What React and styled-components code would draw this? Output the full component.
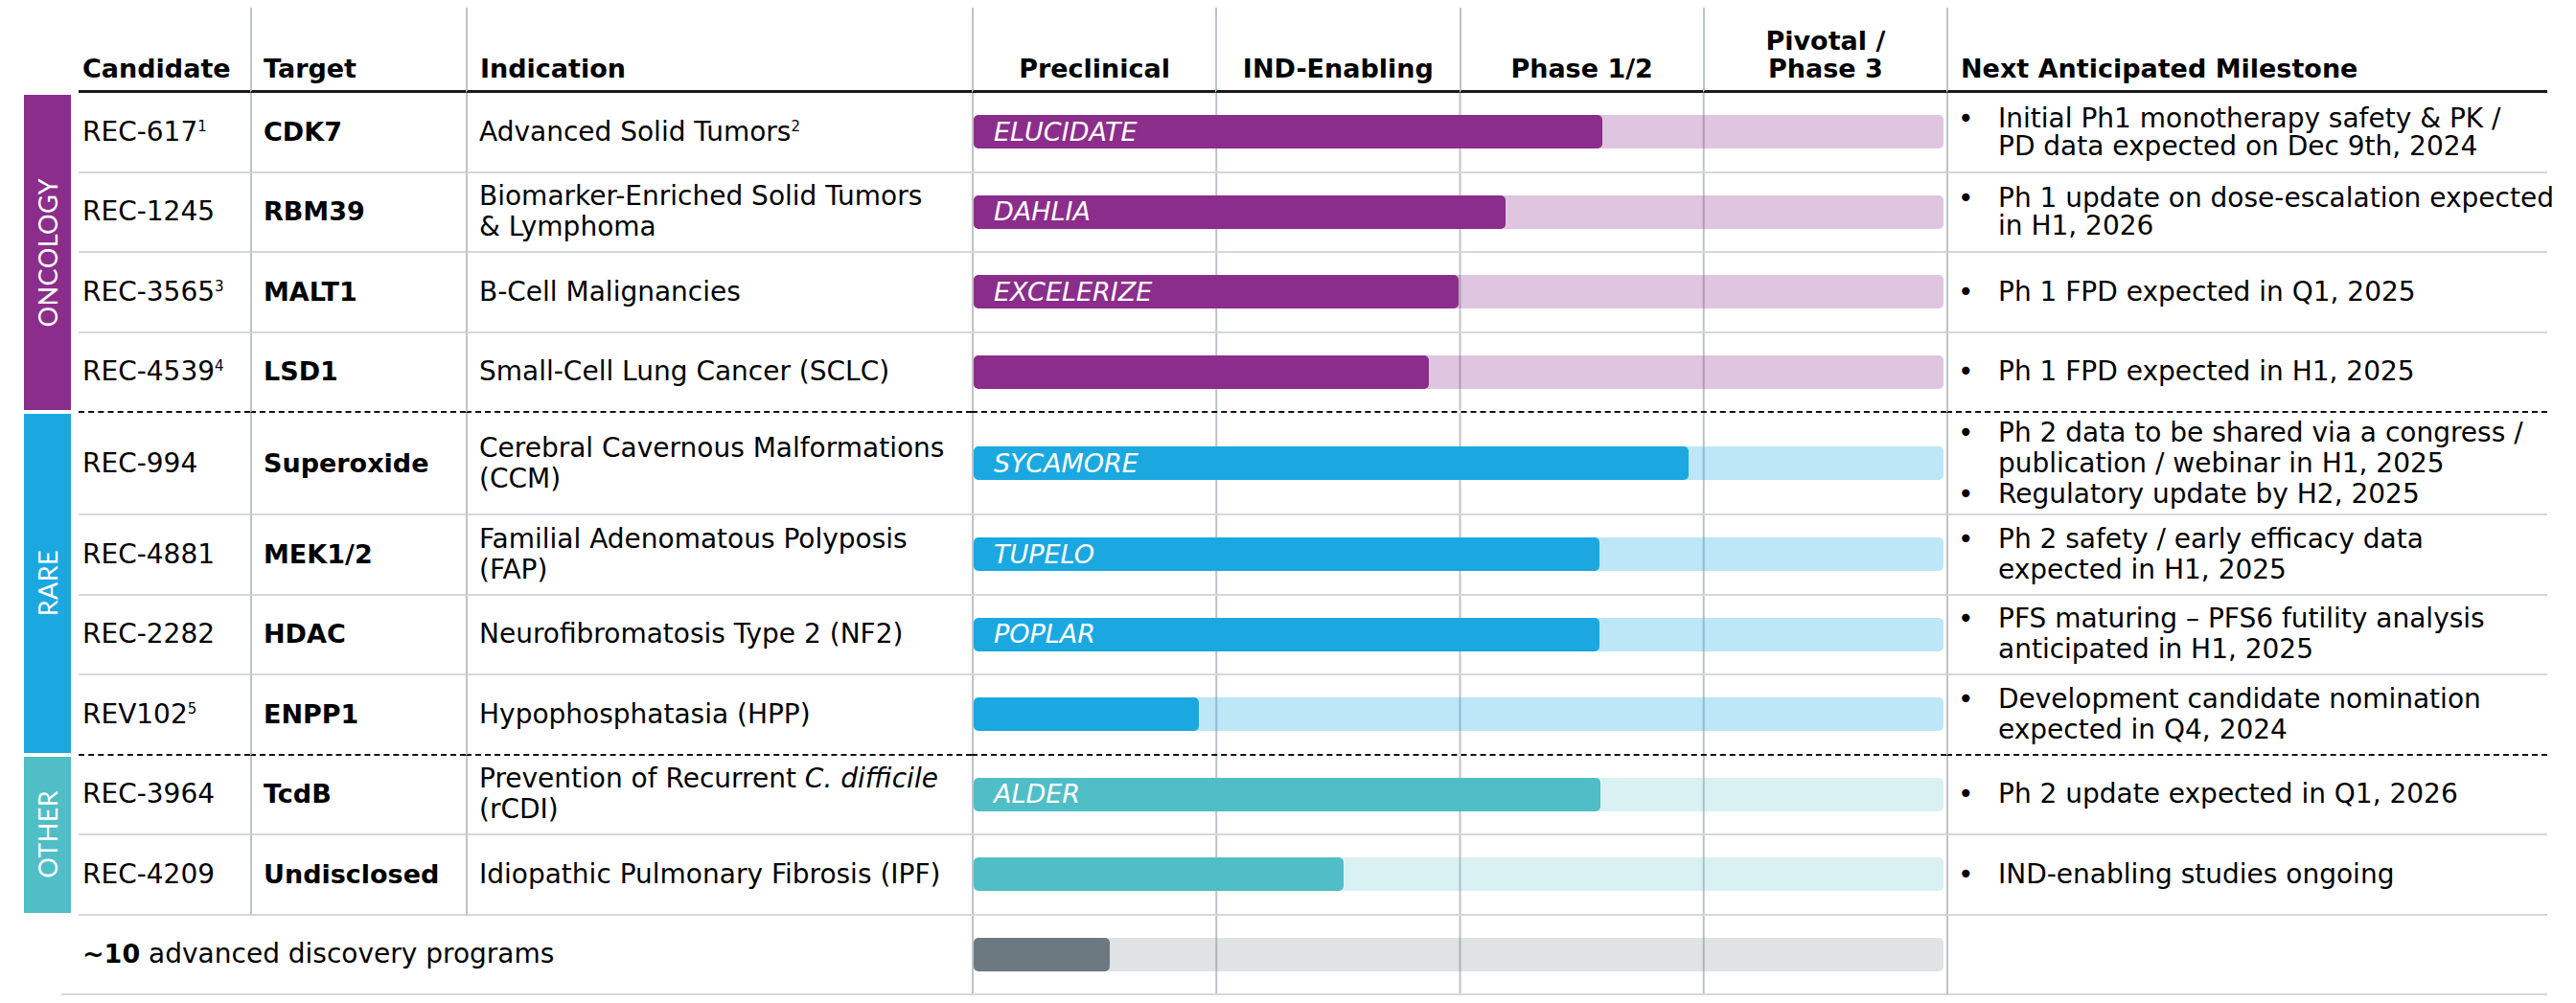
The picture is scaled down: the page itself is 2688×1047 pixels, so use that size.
import styled, {createGlobalStyle} from 'styled-components'

const GlobalStyle = createGlobalStyle`
  html, body {
    margin: 0;
    padding: 0;
    background: #fff;
  }

  body {
    font-family: 'DejaVu Sans', Verdana, sans-serif;
    color: #000;
  }
`

const palette = {
  oncology: {solid: '#8b2d8b', track: 'rgba(139, 45, 139, 0.28)'},
  rare: {solid: '#1ba8e0', track: 'rgba(27, 168, 224, 0.29)'},
  other: {solid: '#4fbec6', track: 'rgba(79, 190, 198, 0.21)'},
  discovery: {solid: '#6c7980', track: 'rgba(108, 121, 128, 0.21)'},
}

const GRID_LINE = '#bcc3c8'
const ROW_LINE = '#d4d8db'

const Page = styled.div`
  width: 2688px;
  height: 1047px;
  padding: 8px 0 0 25px;
  box-sizing: border-box;
  overflow: hidden;
`

const Table = styled.div`
  display: grid;
  grid-template-columns: 57px 179px 225px 528px 1017px 627px;
  grid-template-rows: 89px repeat(4, 83.5px) 107px repeat(6, 83.5px);

  & > * {
    box-sizing: border-box;
    min-width: 0;
  }
`

const Corner = styled.div``

const HeadCell = styled.div`
  display: flex;
  align-items: flex-end;
  justify-content: ${({$center}) => ($center ? 'center' : 'flex-start')};
  padding: 0 0 8px ${({$pad}) => $pad || 0}px;
  border-bottom: 3px solid #1a1a1a;
  border-left: ${({$line}) => ($line ? `2px solid ${GRID_LINE}` : '0')};
  font-size: 27px;
  font-weight: 700;
  line-height: 29px;
  text-align: center;
  white-space: nowrap;
  box-sizing: border-box;
`

const PhaseHead = styled.div`
  display: grid;
  grid-template-columns: repeat(4, 1fr);
`

const Category = styled.div`
  grid-row: span ${({$span}) => $span};
  margin: ${({$top}) => $top}px 8px 3px 0;
  background: ${({$tone}) => palette[$tone].solid};
  display: flex;
  align-items: center;
  justify-content: center;
`

const CategoryLabel = styled.span`
  writing-mode: vertical-rl;
  transform: rotate(180deg);
  font-family: Lato, 'DejaVu Sans', sans-serif;
  font-size: 27px;
  letter-spacing: 0.4px;
  color: #fff;
`

const Cell = styled.div`
  display: flex;
  flex-direction: column;
  justify-content: center;
  padding-left: ${({$pad}) => $pad || 0}px;
  border-bottom: 2px ${({$edge}) => ($edge === 'dashed' ? 'dashed #111' : `solid ${ROW_LINE}`)};
  border-left: ${({$line}) => ($line ? `2px solid ${GRID_LINE}` : '0')};
  font-size: 28px;
  line-height: ${({$tight}) => ($tight ? 29 : 32)}px;
  white-space: nowrap;
`

const Target = styled(Cell)`
  font-size: 27px;
  font-weight: 700;
`

const Lead = styled.div`
  margin-left: 39px;
  border-bottom: 2px solid ${ROW_LINE};
`

const Discovery = styled(Cell)`
  grid-column: span 3;

  b {
    font-size: 27px;
  }
`

const PhaseCell = styled(Cell)`
  flex-direction: row;
  align-items: center;
  padding: 0 3px 0 2px;
  background: linear-gradient(to right, ${GRID_LINE} 2px, transparent 2px) 0 0 / 25% 100% repeat-x;
`

const Track = styled.div`
  flex: 1;
  display: flex;
  height: 35px;
  border-radius: 5px;
  background: ${({$tone}) => palette[$tone].track};
`

const Fill = styled.div`
  width: ${({$width}) => $width}px;
  display: flex;
  align-items: center;
  padding-left: 21px;
  box-sizing: border-box;
  border-radius: 5px;
  background: ${({$tone}) => palette[$tone].solid};
  color: #fff;
  font-size: 27px;
  font-style: italic;
`

const Bullet = styled.div`
  display: flex;
`

const Dot = styled.span`
  flex: none;
  width: 42px;
`

const Sup = styled.sup`
  font-size: 15px;
  line-height: 0;
  vertical-align: 10px;
`

const groups = [
  {
    tone: 'oncology',
    label: 'ONCOLOGY',
    top: 2,
    rows: [
      {
        candidate: 'REC-617', note: '1', target: 'CDK7',
        indication: [<>Advanced Solid Tumors<Sup>2</Sup></>],
        program: 'ELUCIDATE', progress: 656, tight: true,
        milestones: [['Initial Ph1 monotherapy safety & PK /', 'PD data expected on Dec 9th, 2024']],
      },
      {
        candidate: 'REC-1245', target: 'RBM39',
        indication: ['Biomarker-Enriched Solid Tumors', '& Lymphoma'],
        program: 'DAHLIA', progress: 555, tight: true,
        milestones: [['Ph 1 update on dose-escalation expected', 'in H1, 2026']],
      },
      {
        candidate: 'REC-3565', note: '3', target: 'MALT1',
        indication: ['B-Cell Malignancies'],
        program: 'EXCELERIZE', progress: 506,
        milestones: [['Ph 1 FPD expected in Q1, 2025']],
      },
      {
        candidate: 'REC-4539', note: '4', target: 'LSD1',
        indication: ['Small-Cell Lung Cancer (SCLC)'],
        progress: 475,
        milestones: [['Ph 1 FPD expected in H1, 2025']],
      },
    ],
  },
  {
    tone: 'rare',
    label: 'RARE',
    top: 1,
    rows: [
      {
        candidate: 'REC-994', target: 'Superoxide',
        indication: ['Cerebral Cavernous Malformations', '(CCM)'],
        program: 'SYCAMORE', progress: 746,
        milestones: [
          ['Ph 2 data to be shared via a congress /', 'publication / webinar in H1, 2025'],
          ['Regulatory update by H2, 2025'],
        ],
      },
      {
        candidate: 'REC-4881', target: 'MEK1/2',
        indication: ['Familial Adenomatous Polyposis', '(FAP)'],
        program: 'TUPELO', progress: 653,
        milestones: [['Ph 2 safety / early efficacy data', 'expected in H1, 2025']],
      },
      {
        candidate: 'REC-2282', target: 'HDAC',
        indication: ['Neurofibromatosis Type 2 (NF2)'],
        program: 'POPLAR', progress: 653,
        milestones: [['PFS maturing \u2013 PFS6 futility analysis', 'anticipated in H1, 2025']],
      },
      {
        candidate: 'REV102', note: '5', target: 'ENPP1',
        indication: ['Hypophosphatasia (HPP)'],
        progress: 235,
        milestones: [['Development candidate nomination', 'expected in Q4, 2024']],
      },
    ],
  },
  {
    tone: 'other',
    label: 'OTHER',
    top: 1,
    last: true,
    rows: [
      {
        candidate: 'REC-3964', target: 'TcdB',
        indication: [<>Prevention of Recurrent <em>C. difficile</em></>, '(rCDI)'],
        program: 'ALDER', progress: 654,
        milestones: [['Ph 2 update expected in Q1, 2026']],
      },
      {
        candidate: 'REC-4209', target: 'Undisclosed',
        indication: ['Idiopathic Pulmonary Fibrosis (IPF)'],
        progress: 386,
        milestones: [['IND-enabling studies ongoing']],
      },
    ],
  },
]

const phases = ['Preclinical', 'IND-Enabling', 'Phase 1/2', <>Pivotal /<br/>Phase 3</>]

const Lines = ({lines}) => lines.map((line, i) => <div key={i}>{line}</div>)

const ProgramRow = ({row, tone, edge}) => (
  <>
    <Cell $pad={4} $edge={edge}>
      <div>{row.candidate}{row.note && <Sup>{row.note}</Sup>}</div>
    </Cell>
    <Target $pad={12} $line $edge={edge}>{row.target}</Target>
    <Cell $pad={12} $line $edge={edge}>
      <Lines lines={row.indication}/>
    </Cell>
    <PhaseCell $edge={edge}>
      <Track $tone={tone}>
        <Fill $tone={tone} $width={row.progress}>{row.program}</Fill>
      </Track>
    </PhaseCell>
    <Cell $pad={10} $line $edge={edge} $tight={row.tight}>
      {row.milestones.map((lines, i) => (
        <Bullet key={i}>
          <Dot>•</Dot>
          <div><Lines lines={lines}/></div>
        </Bullet>
      ))}
    </Cell>
  </>
)

const App = () => (
  <Page>
    <GlobalStyle/>
    <Table>
      <Corner/>
      <HeadCell $pad={4}>Candidate</HeadCell>
      <HeadCell $pad={12} $line>Target</HeadCell>
      <HeadCell $pad={13} $line>Indication</HeadCell>
      <PhaseHead>
        {phases.map((phase, i) => (
          <HeadCell key={i} $line $center>{phase}</HeadCell>
        ))}
      </PhaseHead>
      <HeadCell $pad={13} $line>Next Anticipated Milestone</HeadCell>

      {groups.map(group => group.rows.map((row, i) => {
        const isEnd = i === group.rows.length - 1 && !group.last
        return (
          <ProgramRowWrap key={row.candidate} first={i === 0} group={group}>
            <ProgramRow row={row} tone={group.tone} edge={isEnd ? 'dashed' : 'solid'}/>
          </ProgramRowWrap>
        )
      }))}

      <Lead/>
      <Discovery $pad={4}>
        <div><b>~10</b> advanced discovery programs</div>
      </Discovery>
      <PhaseCell>
        <Track $tone="discovery">
          <Fill $tone="discovery" $width={142}/>
        </Track>
      </PhaseCell>
      <Cell $line/>
    </Table>
  </Page>
)

const ProgramRowWrap = ({first, group, children}) => (
  <>
    {first && (
      <Category $tone={group.tone} $span={group.rows.length} $top={group.top}>
        <CategoryLabel>{group.label}</CategoryLabel>
      </Category>
    )}
    {children}
  </>
)

export default App
